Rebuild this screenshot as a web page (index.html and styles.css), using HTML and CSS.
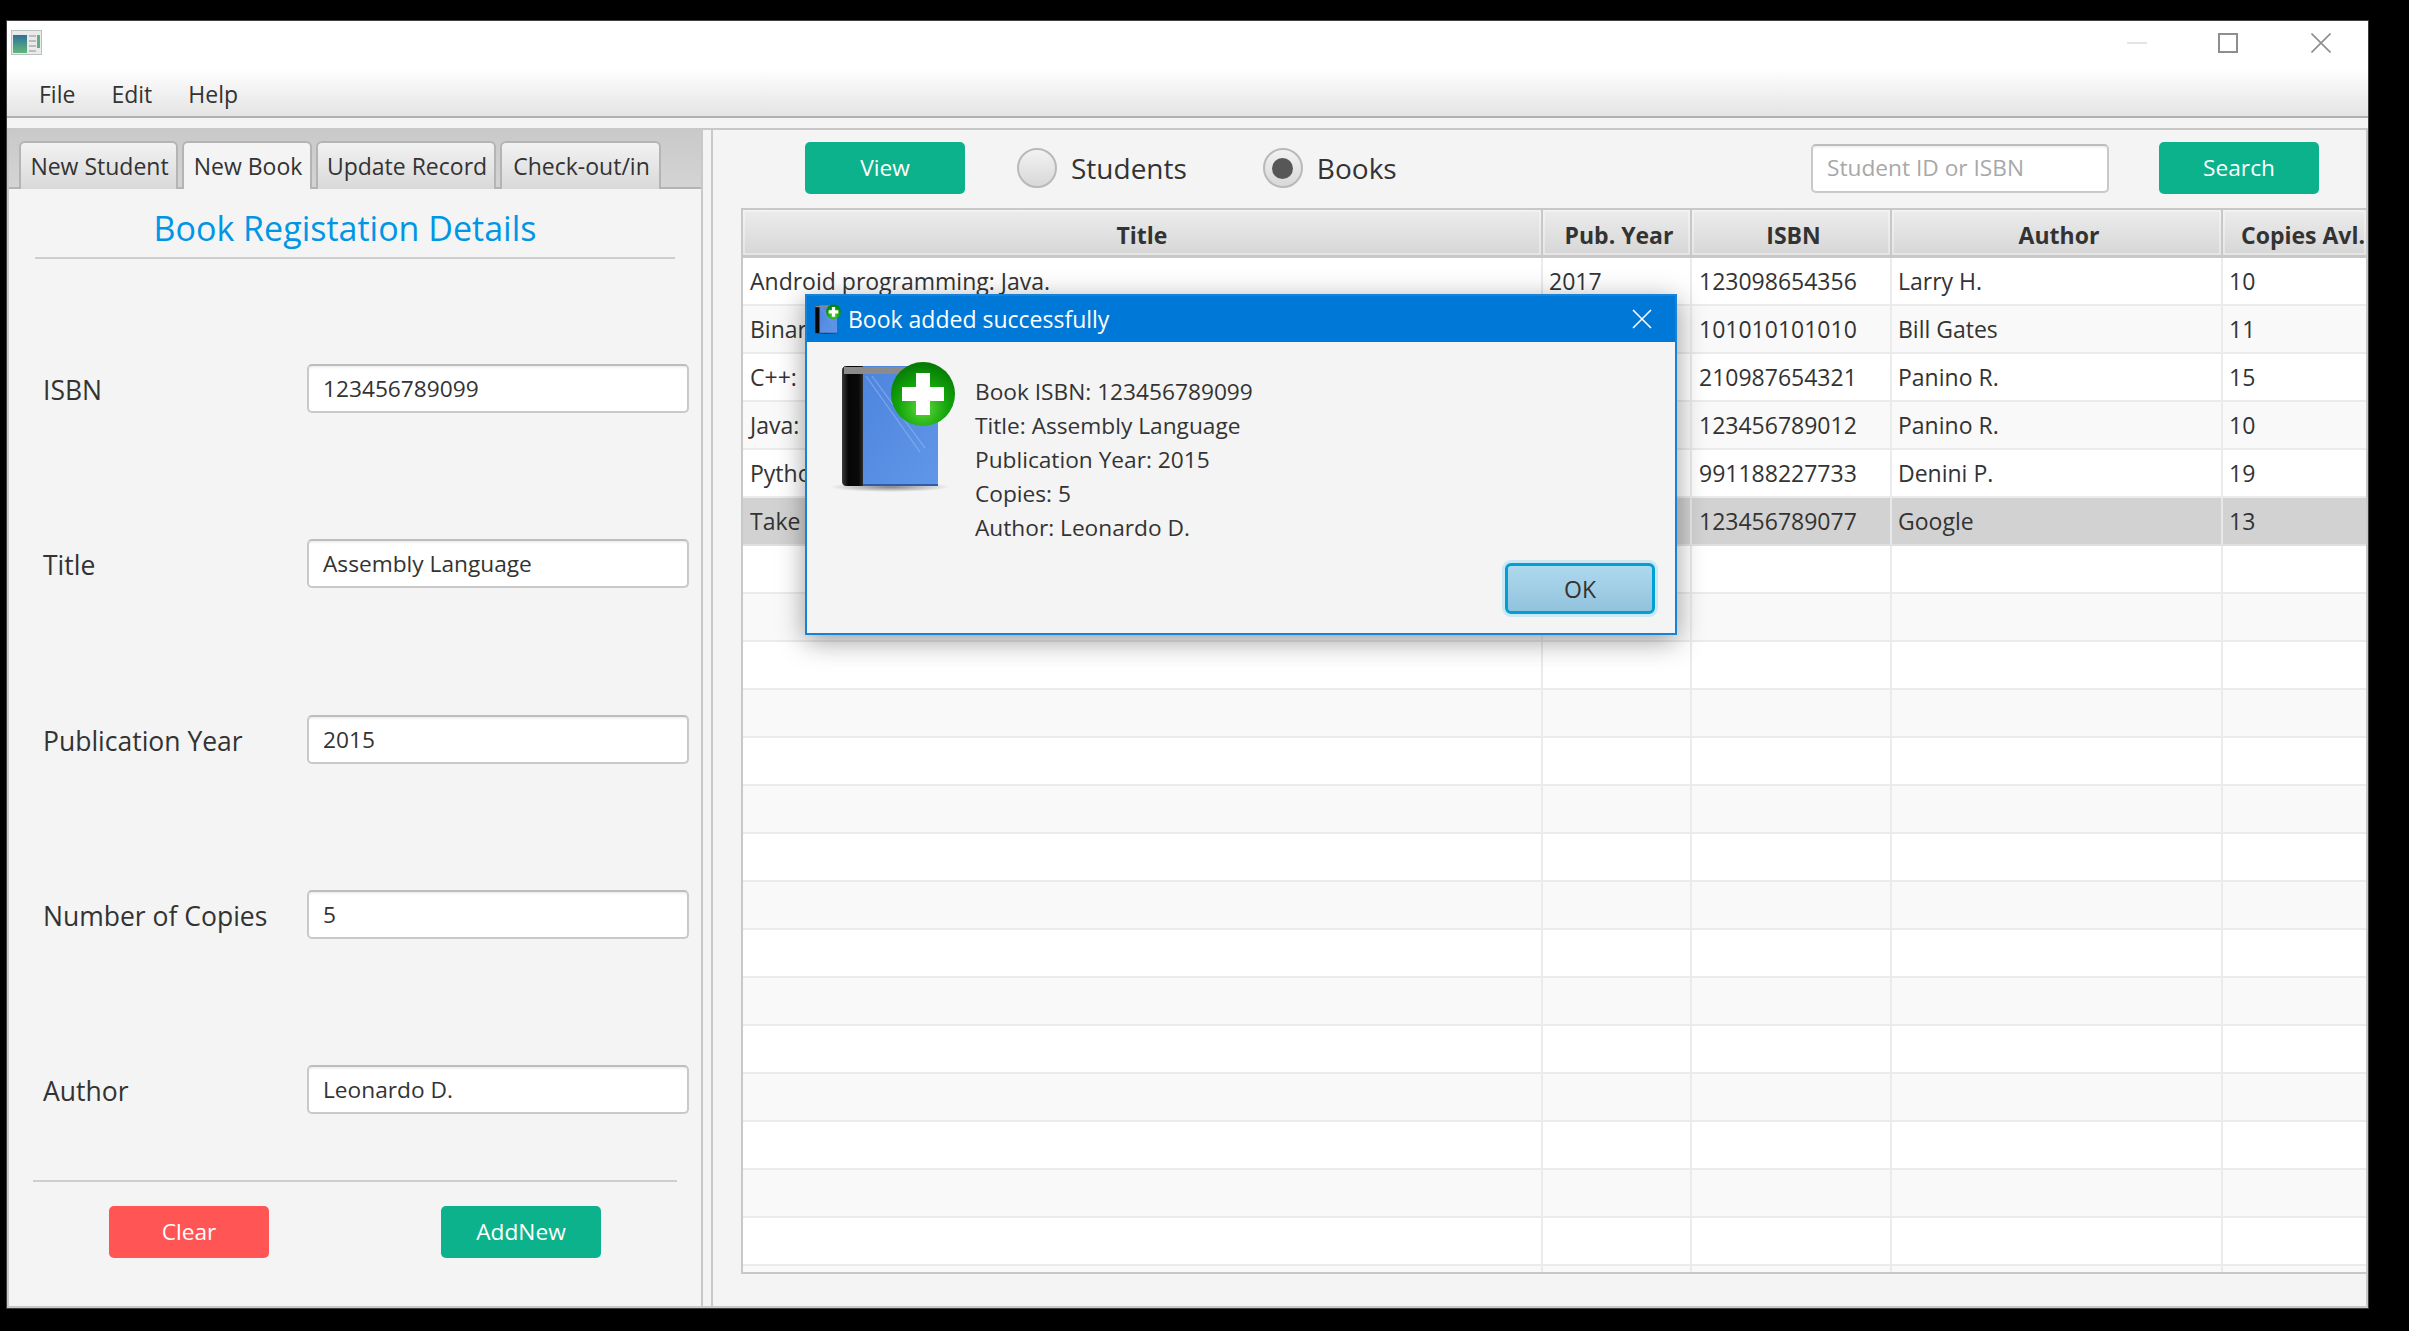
FILE: index.html
```html
<!DOCTYPE html>
<html lang="en">
<head>
<meta charset="utf-8">
<title>Library</title>
<link rel="stylesheet" href="styles.css">
</head>
<body>
<div class="window">
  <header class="titlebar">
    <svg class="app-icon" viewBox="0 0 31 25" aria-hidden="true">
      <defs><linearGradient id="appg" x1="0" y1="0" x2="0" y2="1"><stop offset="0" stop-color="#2f6f9a"/><stop offset="1" stop-color="#63b878"/></linearGradient></defs>
      <rect x="0.5" y="0.5" width="30" height="24" fill="#e8ebea" stroke="#b9c0c2"/>
      <rect x="2" y="5" width="14" height="18" fill="url(#appg)"/>
      <rect x="18" y="5" width="7" height="2" fill="#bcbcbc"/><rect x="18" y="10" width="7" height="2" fill="#bcbcbc"/><rect x="18" y="15" width="7" height="2" fill="#bcbcbc"/><rect x="18" y="20" width="7" height="2" fill="#bcbcbc"/>
      <rect x="26" y="5" width="3" height="13" fill="#5fae84"/>
    </svg>
    <div class="win-controls">
      <svg class="ctl ctl-min" viewBox="0 0 20 20" aria-hidden="true"><path d="M0 10H20" stroke="#e4e4e4" stroke-width="2"/></svg>
      <svg class="ctl ctl-max" viewBox="0 0 20 20" aria-hidden="true"><rect x="1" y="1" width="18" height="18" fill="none" stroke="#8e8e8e" stroke-width="2"/></svg>
      <svg class="ctl ctl-close" viewBox="0 0 20 20" aria-hidden="true"><path d="M0.5 0.5L19.5 19.5M19.5 0.5L0.5 19.5" stroke="#8e8e8e" stroke-width="1.6"/></svg>
    </div>
  </header>
  <nav class="menubar"><span>File</span><span>Edit</span><span>Help</span></nav>
  <div class="menu-gap"></div>
  <main class="split">
    <section class="left">
      <div class="tabs">
        <div class="tab tab-student">New Student</div>
        <div class="tab tab-book active">New Book</div>
        <div class="tab tab-update">Update Record</div>
        <div class="tab tab-check">Check-out/in</div>
      </div>
      <div class="left-body">
        <h1 class="form-title">Book Registation Details</h1>
        <div class="form">
          <div class="form-row"><label>ISBN</label><div class="input">123456789099</div></div>
          <div class="form-row"><label>Title</label><div class="input">Assembly Language</div></div>
          <div class="form-row"><label>Publication Year</label><div class="input">2015</div></div>
          <div class="form-row"><label>Number of Copies</label><div class="input">5</div></div>
          <div class="form-row"><label>Author</label><div class="input">Leonardo D.</div></div>
        </div>
        <div class="form-actions">
          <button class="btn btn-red">Clear</button>
          <button class="btn btn-green">AddNew</button>
        </div>
      </div>
    </section>
    <div class="divider"></div>
    <section class="right">
      <div class="toolbar">
        <button class="btn btn-green">View</button>
        <div class="radio radio-students"><span class="dot"></span>Students</div>
        <div class="radio radio-books"><span class="dot on"></span>Books</div>
        <div class="search">
          <div class="input search-input">Student ID or ISBN</div>
          <button class="btn btn-green">Search</button>
        </div>
      </div>
      <div class="table">
        <div class="row head"><div>Title</div><div>Pub. Year</div><div>ISBN</div><div>Author</div><div>Copies Avl.</div></div>
        <div class="row"><div>Android programming: Java.</div><div>2017</div><div>123098654356</div><div>Larry H.</div><div>10</div></div>
        <div class="row"><div>Binary</div><div></div><div>101010101010</div><div>Bill Gates</div><div>11</div></div>
        <div class="row"><div>C++:</div><div></div><div>210987654321</div><div>Panino R.</div><div>15</div></div>
        <div class="row"><div>Java:</div><div></div><div>123456789012</div><div>Panino R.</div><div>10</div></div>
        <div class="row"><div>Python</div><div></div><div>991188227733</div><div>Denini P.</div><div>19</div></div>
        <div class="row selected"><div>Take</div><div></div><div>123456789077</div><div>Google</div><div>13</div></div>
        <div class="row"><div></div><div></div><div></div><div></div><div></div></div>
        <div class="row"><div></div><div></div><div></div><div></div><div></div></div>
        <div class="row"><div></div><div></div><div></div><div></div><div></div></div>
        <div class="row"><div></div><div></div><div></div><div></div><div></div></div>
        <div class="row"><div></div><div></div><div></div><div></div><div></div></div>
        <div class="row"><div></div><div></div><div></div><div></div><div></div></div>
        <div class="row"><div></div><div></div><div></div><div></div><div></div></div>
        <div class="row"><div></div><div></div><div></div><div></div><div></div></div>
        <div class="row"><div></div><div></div><div></div><div></div><div></div></div>
        <div class="row"><div></div><div></div><div></div><div></div><div></div></div>
        <div class="row"><div></div><div></div><div></div><div></div><div></div></div>
        <div class="row"><div></div><div></div><div></div><div></div><div></div></div>
        <div class="row"><div></div><div></div><div></div><div></div><div></div></div>
        <div class="row"><div></div><div></div><div></div><div></div><div></div></div>
        <div class="row"><div></div><div></div><div></div><div></div><div></div></div>
        <div class="row"><div></div><div></div><div></div><div></div><div></div></div>
      </div>
    </section>
  </main>

  <div class="dialog">
    <div class="dialog-title">
      <svg class="dialog-title-icon" viewBox="15 0 118 130" aria-hidden="true"><use href="#book"/></svg>
      <span>Book added successfully</span>
      <svg class="dialog-close" viewBox="0 0 20 20" aria-hidden="true"><path d="M1 1L19 19M19 1L1 19" stroke="#fff" stroke-width="1.6"/></svg>
    </div>
    <div class="dialog-body">
      <svg class="book-icon" viewBox="0 0 135 135" aria-hidden="true">
        <defs>
          <linearGradient id="bk-blue" x1="0" y1="0" x2="1" y2="1"><stop offset="0" stop-color="#4a82dc"/><stop offset="1" stop-color="#6197e8"/></linearGradient>
          <linearGradient id="bk-spine" x1="0" y1="0" x2="1" y2="0"><stop offset="0" stop-color="#3a3a3a"/><stop offset="0.3" stop-color="#060606"/><stop offset="0.8" stop-color="#0a0a0a"/><stop offset="1" stop-color="#2c2c2c"/></linearGradient>
          <radialGradient id="bk-green" cx="0.5" cy="0.72" r="0.68"><stop offset="0" stop-color="#5fd83c"/><stop offset="0.55" stop-color="#14a60c"/><stop offset="1" stop-color="#067c04"/></radialGradient>
          <radialGradient id="bk-shadow"><stop offset="0" stop-color="#000" stop-opacity="0.45"/><stop offset="1" stop-color="#000" stop-opacity="0"/></radialGradient>
        </defs>
        <g id="book">
          <ellipse cx="65" cy="127" rx="60" ry="5" fill="url(#bk-shadow)"/>
          <path d="M22 6H108Q113 6 113 11V122Q113 126 109 126H22Q17 126 17 121V11Q17 6 22 6Z" fill="url(#bk-blue)"/>
          <path d="M41 16L95 92M47 16L100 88" stroke="#a9c6f2" stroke-width="1.2" opacity="0.5" fill="none"/>
          <path d="M22 6H38V126H22Q17 126 17 121V11Q17 6 22 6Z" fill="url(#bk-spine)"/>
          <path d="M19 7H110V14H19Z" fill="#8b8b8b"/>
          <path d="M38 124H113V126H38Z" fill="#2f5ca4"/>
          <circle cx="98" cy="34" r="32" fill="url(#bk-green)"/>
          <path d="M91 13H105V27H119V41H105V55H91V41H77V27H91Z" fill="#fff"/>
        </g>
      </svg>
      <div class="dialog-text">
        <p>Book ISBN: 123456789099</p>
        <p>Title: Assembly Language</p>
        <p>Publication Year: 2015</p>
        <p>Copies: 5</p>
        <p>Author: Leonardo D.</p>
      </div>
    </div>
    <div class="dialog-actions"><button class="ok">OK</button></div>
  </div>
</div>
</body>
</html>
```

FILE: styles.css
```css
* { box-sizing: border-box; }
html, body { margin: 0; height: 100%; }
body {
  background: #000;
  padding: 20px 0 0 6px;
  font-family: "Open Sans", "Noto Sans", sans-serif;
  font-size: 23px;
  color: #333;
  overflow: hidden;
}
.window {
  position: relative;
  width: 2363px;
  height: 1289px;
  background: #f4f4f4;
  border: 1px solid #3c3c3c;
  border-top-color: #444;
  display: flex;
  flex-direction: column;
}
.titlebar {
  height: 47px;
  background: #fff;
  display: flex;
  align-items: flex-start;
  justify-content: space-between;
  flex: none;
}
.app-icon { width: 31px; height: 25px; margin: 9px 0 0 4px; }
.win-controls { display: flex; padding: 12px 37px 0 0; gap: 71px; }
.ctl { width: 20px; height: 20px; display: block; }
.ctl-close { margin-left: 2px; }
.menubar {
  height: 50px;
  flex: none;
  background: linear-gradient(#fff, #e4e4e4);
  border-bottom: 2px solid #b0b0b0;
  display: flex;
  align-items: center;
  gap: 36px;
  padding: 3px 0 0 32px;
}
.menu-gap { height: 10px; flex: none; }
.split {
  height: 1180px;
  flex: none;
  display: flex;
  border: 2px solid #c8c8c8;
}
.left { width: 694px; flex: none; display: flex; flex-direction: column; border-right: 2px solid #c8c8c8; }
.tabs {
  height: 59px;
  flex: none;
  display: flex;
  gap: 4px;
  padding: 11px 0 0 10px;
  background: linear-gradient(#c9c9c9, #d4d4d4);
  border-bottom: 2px solid #b4b4b4;
}
.tab {
  height: 48px;
  border: 2px solid #b4b4b4;
  border-bottom: 0;
  border-radius: 6px 6px 0 0;
  background: linear-gradient(#f2f2f2, #d9d9d9);
  display: flex;
  align-items: center;
  justify-content: center;
  padding: 0 0 1px 2px;
  white-space: nowrap;
}
.tab.active { background: #f4f4f4; position: relative; }
.tab-student { width: 159px; }
.tab-book { width: 130px; }
.tab-update { width: 180px; }
.tab-check { width: 161px; }
.left-body { flex: 1; display: flex; flex-direction: column; padding: 0 12px 0 0; }
.form-title {
  margin: 0 0 0 26px;
  width: 640px;
  height: 70px;
  border-bottom: 2px solid #cecece;
  font-weight: 400;
  font-size: 34px;
  color: #0096e6;
  text-align: center;
  line-height: 60px;
  padding: 9px 20px 0 0;
}
.form {
  margin-top: 105px;
  height: 750px;
  display: flex;
  flex-direction: column;
  justify-content: space-between;
}
.form-row { display: flex; align-items: center; height: 49px; padding-left: 34px; }
.form-row label { width: 264px; flex: none; font-size: 26.5px; padding-top: 3px; }
.input {
  height: 49px;
  background: #fff;
  border: 2px solid #c9c9c9;
  border-top-color: #bdbdbd;
  border-radius: 5px;
  display: flex;
  align-items: center;
  padding: 0 14px;
  font-size: 22.7px;
  box-shadow: inset 0 3px 3px -2px #e6e6e6;
}
.form-row .input { width: 382px; }
.form-actions {
  margin: 66px 0 0 24px;
  width: 644px;
  border-top: 2px solid #cecece;
  padding: 24px 0 0 76px;
  display: flex;
  gap: 172px;
}
.btn {
  width: 160px;
  height: 52px;
  border: 0;
  border-radius: 5px;
  color: #fff;
  font: inherit;
  font-size: 22.7px;
  padding: 0 0 2px;
}
.btn-red { background: #ff5555; }
.btn-green { background: #0bb28c; }
.divider { width: 8px; flex: none; }
.right { flex: 1; min-width: 0; border-left: 2px solid #c8c8c8; display: flex; flex-direction: column; }
.toolbar {
  height: 78px;
  flex: none;
  display: flex;
  align-items: center;
  padding: 0 47px 2px 92px;
}
.radio { display: flex; align-items: center; font-size: 28px; line-height: 38px; }
.radio-students { margin-left: 52px; }
.radio-books { margin-left: 76px; }
.dot {
  width: 40px;
  height: 40px;
  border-radius: 50%;
  border: 2px solid #b9b9b9;
  background: linear-gradient(#f2f2f2, #d8d8d8);
  margin-right: 14px;
  display: flex;
  align-items: center;
  justify-content: center;
}
.dot.on::after { content: ""; width: 21px; height: 21px; border-radius: 50%; background: #575757; }
.search { margin-left: auto; display: flex; align-items: center; gap: 50px; }
.search-input { width: 298px; color: #a8a8a8; padding-bottom: 2px; }
.table {
  margin-left: 28px;
  height: 1066px;
  border: 2px solid #c8c8c8;
  border-right: 0;
  background: #fff;
  overflow: hidden;
}
.row {
  display: grid;
  grid-template-columns: 800px 149px 200px 331px 1fr;
  height: 48px;
  background: #fff;
}
.row:nth-child(odd) { background: #f9f9f9; }
.row > div {
  border-right: 2px solid #ebebeb;
  border-bottom: 2px solid #ebebeb;
  padding: 0 5px 0 6px;
  display: flex;
  align-items: center;
  white-space: nowrap;
  overflow: hidden;
}
.row > div:first-child, .row > div:nth-child(3) { padding-left: 7px; }
.row > div:last-child { border-right: 0; }
.row.selected { background: #d2d2d2; }
.row.selected > div { border-color: #e8e8e8; border-bottom-color: #e0e0e0; }
.row.head { background: linear-gradient(#ececec, #d5d5d5); }
.row.head > div {
  border-right: 2px solid #c8c8c8;
  border-bottom: 3px solid #c8c8c8;
  box-shadow: inset 0 0 0 2px rgba(255, 255, 255, 0.35);
  justify-content: center;
  font-weight: 700;
  padding: 4px 0 0 5px;
}
.row.head > div:first-child { padding-left: 0; }
.row.head > div:last-child { border-right: 0; padding-left: 18px; justify-content: flex-start; }
.dialog {
  position: absolute;
  left: 798px;
  top: 273px;
  width: 872px;
  height: 341px;
  background: #f4f4f4;
  border: 2px solid #1683d8;
  box-shadow: 0 6px 26px rgba(0, 0, 0, 0.38);
  display: flex;
  flex-direction: column;
}
.dialog-title {
  height: 46px;
  flex: none;
  background: #0078d7;
  color: #fff;
  display: flex;
  align-items: center;
  padding-left: 7px;
}
.dialog-title-icon { width: 28px; height: 30px; margin-right: 6px; }
.dialog-close { width: 20px; height: 20px; margin-left: auto; margin-right: 23px; }
.dialog-body { display: flex; padding: 18px 0 0 18px; flex: 1; }
.book-icon { width: 135px; height: 135px; flex: none; }
.dialog-text { margin-left: 15px; padding-top: 15px; font-size: 22.7px; }
.dialog-text p { margin: 0; height: 34px; line-height: 34px; white-space: nowrap; }
.dialog-actions { display: flex; justify-content: flex-end; padding: 0 20px 19px 0; }
.ok {
  width: 150px;
  height: 51px;
  font: inherit;
  color: #333;
  border: 3px solid #039ed3;
  border-radius: 6px;
  background: linear-gradient(#aed9ee, #92c3dd);
  box-shadow: 0 0 0 3px #cbe8f3;
  padding: 0;
}
```
